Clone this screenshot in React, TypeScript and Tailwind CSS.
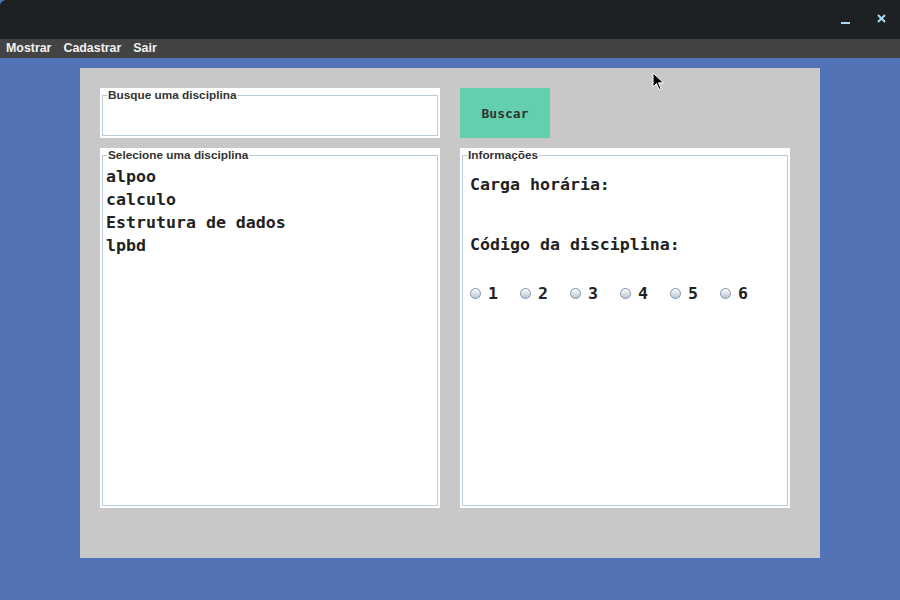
const mono = "font-['DejaVu_Sans_Mono',monospace]";
const sans = "font-['Liberation_Sans',Arial,sans-serif]";

function Group({
  title,
  className,
  children,
}: {
  title: string;
  className?: string;
  children?: React.ReactNode;
}) {
  return (
    <div className={`bg-white p-[2px] pt-0 flex ${className ?? ""}`}>
      <fieldset className="flex-1 border border-[#b9cbdd] min-w-0">
        <legend className={`ml-[4px] px-[1px] text-[11.8px] leading-[14px] font-bold text-[#333] ${sans}`}>
          {title}
        </legend>
        {children}
      </fieldset>
    </div>
  );
}

function Radio({ label }: { label: string }) {
  return (
    <div className="flex items-center w-[50px]">
      <span className="w-[11px] h-[11px] rounded-full border border-[#8391a3] bg-gradient-to-b from-white to-[#b7c6d8]" />
      <span className="ml-[7px]">{label}</span>
    </div>
  );
}

export default function App() {
  const disciplinas = ["alpoo", "calculo", "Estrutura de dados", "lpbd"];
  return (
    <div className="w-[900px] h-[600px] flex flex-col bg-[#5274b7] relative overflow-hidden">
      {/* title bar */}
      <div className="h-[39px] bg-[#1e2124] rounded-tl-[6px] flex items-center justify-end pr-[14px] gap-[27px]">
        <div className="w-[9px] h-[2px] bg-[#a9dcf3] mt-[6px]" />
        <svg width="9" height="9" viewBox="0 0 9 9" className="mb-[2px]">
          <path d="M1 1L8 8M8 1L1 8" stroke="#a9dcf3" strokeWidth="2" />
        </svg>
      </div>
      {/* menu */}
      <div className={`h-[19px] bg-[#434343] flex items-center pl-[6px] gap-[12px] text-[12.4px] font-bold text-[#f2f2f2] ${sans}`}>
        <span>Mostrar</span>
        <span>Cadastrar</span>
        <span>Sair</span>
      </div>
      <div className="flex-1 pt-[10px] pl-[80px]">
        <div className="w-[740px] h-[490px] bg-[#c8c8c8] pt-[20px] pl-[20px] flex flex-col gap-[10px]">
          <div className="flex gap-[20px]">
            <Group title="Busque uma disciplina" className="w-[340px] h-[50px]" />
            <button className={`w-[90px] h-[50px] pt-[2px] bg-[#63cfae] text-[13px] font-bold text-[#333] ${mono}`}>
              Buscar
            </button>
          </div>
          <div className="flex gap-[20px]">
            <Group title="Selecione uma disciplina" className="w-[340px] h-[360px]">
              <ul className={`pl-[3px] pt-[3px] text-[16.6px] leading-[23px] font-bold text-[#222] ${mono}`}>
                {disciplinas.map((d) => (
                  <li key={d}>{d}</li>
                ))}
              </ul>
            </Group>
            <Group title="Informações" className="w-[330px] h-[360px]">
              <div className={`pl-[7px] pt-[11px] text-[16.6px] leading-[23px] font-bold text-[#222] ${mono}`}>
                <div>Carga horária:</div>
                <div className="mt-[37px]">Código da disciplina:</div>
                <div className="mt-[26px] flex">
                  {["1", "2", "3", "4", "5", "6"].map((n) => (
                    <Radio key={n} label={n} />
                  ))}
                </div>
              </div>
            </Group>
          </div>
        </div>
      </div>
      {/* mouse cursor */}
      <svg width="14" height="20" viewBox="0 0 14 20" className="absolute left-[652px] top-[72px]">
        <path d="M1 1L1 15L4.5 11.5L7 17.5L9 16.5L6.5 10.8L11.5 10.8Z" fill="#000" stroke="#fff" strokeWidth="1" />
      </svg>
    </div>
  );
}
